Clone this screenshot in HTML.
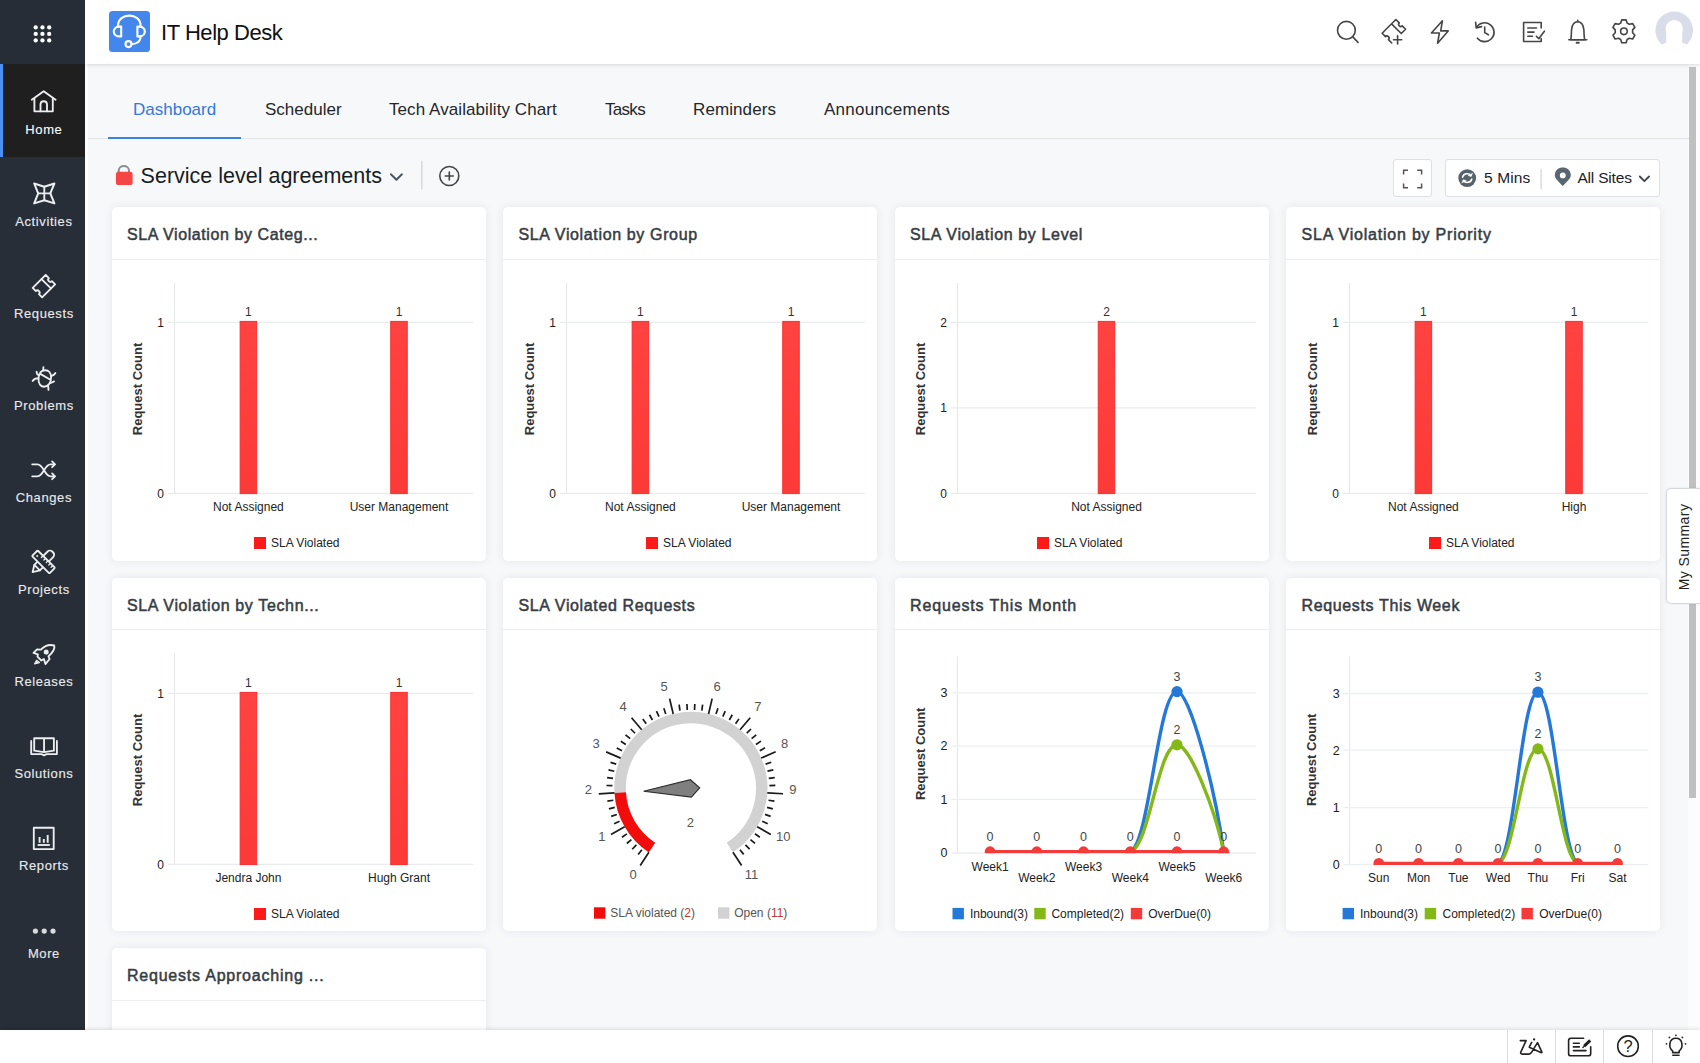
<!DOCTYPE html>
<html lang="en">
<head>
<meta charset="utf-8">
<title>IT Help Desk</title>
<style>
*{box-sizing:border-box;margin:0;padding:0}
html,body{width:1700px;height:1063px;overflow:hidden}
body{font-family:"Liberation Sans",sans-serif;background:#f7f8fa;position:relative;color:#222}
.abs{position:absolute}
#side{position:absolute;left:0;top:0;width:85px;height:1029.5px;background:#272e37}
#side .top{position:absolute;left:0;top:0;width:85px;height:64px;background:#262d36}
#side .item{position:absolute;left:0;width:85px;height:92px;text-align:center;color:#e9ebed;font-size:13px}
#side .item.active{background:#1f1f20;border-left:3px solid #4a8ff2;color:#fff;height:93.4px}
#side .item .lbl{position:absolute;left:0;width:85px;text-align:center;top:55px;line-height:18px;letter-spacing:.6px;-webkit-text-stroke:.12px #e9ebed}
#side .item svg{position:absolute;left:29px;top:23px}
#hdr{position:absolute;left:85px;top:0;width:1615px;height:64px;background:#fff;box-shadow:0 1px 4px rgba(0,0,0,.14)}
#gap{position:absolute;left:85px;top:64px;width:3px;height:965px;background:#fff}
#logo{position:absolute;left:109px;top:11px;width:41px;height:41px;border-radius:3.5px;background:#4487ec}
#brand{position:absolute;left:161px;top:19.4px;font-size:22px;letter-spacing:-.45px;line-height:28px;color:#111;white-space:nowrap}
#tabs{position:absolute;left:88px;top:82px;width:1601px;height:57px;border-bottom:1px solid #dfe2e6}
#tabs .tab{position:absolute;top:0;height:57px;line-height:56px;font-size:17px;color:#23272b;white-space:nowrap}
#tabs .tab.on{color:#3377e0}
#tabs .ul{position:absolute;left:20px;top:54.5px;width:133px;height:2.5px;background:#3b82e8}
#ttl{position:absolute;left:140.6px;top:161.4px;font-size:21.5px;line-height:30px;color:#171d24;white-space:nowrap}
.card{position:absolute;width:374.2px;height:353.4px;background:#fff;border-radius:5px;box-shadow:0 0 9px rgba(40,50,70,.085)}
.card .hd{position:absolute;left:0;top:0;width:100%;height:52.8px;border-bottom:1.5px solid #eceef0;padding-left:15.5px;line-height:56px;font-size:16px;font-weight:400;-webkit-text-stroke:.5px #363c43;letter-spacing:.64px;color:#363c43;white-space:nowrap}
.card svg.ch{position:absolute;left:0;top:53px}
.ch{fill:#222}
.ch text{font-family:"Liberation Sans",sans-serif;font-size:12px}
#foot{position:absolute;left:0;top:1029.5px;width:1700px;height:34px;background:#fff;box-shadow:0 -1px 4px rgba(0,0,0,.12)}
#foot .cell{position:absolute;top:0;width:1px;height:34px;background:#d9dce0}
#sb{position:absolute;left:1689.3px;top:67px;width:6.9px;height:731.4px;background:#c1c0c1}
#sbtrack{position:absolute;left:1688px;top:64px;width:12px;height:966px;background:#fcfcfc}
#mysum{position:absolute;left:1666px;top:488px;width:40px;height:116px;background:#fff;border:1px solid #d5d8dc;border-radius:5px 0 0 5px;box-shadow:0 0 3px rgba(0,0,0,.08)}
</style>
</head>
<body>

<div id="sbtrack"></div>
<div id="sb"></div>
<div id="tabs">
 <div class="tab on" style="left:45px">Dashboard</div>
 <div class="tab" style="left:177px">Scheduler</div>
 <div class="tab" style="left:301px;letter-spacing:.08px">Tech Availability Chart</div>
 <div class="tab" style="left:517px;letter-spacing:-.7px">Tasks</div>
 <div class="tab" style="left:605px;letter-spacing:.1px">Reminders</div>
 <div class="tab" style="left:736px;letter-spacing:.25px">Announcements</div>
 <div class="ul"></div>
</div>
<div id="ttl">Service level agreements</div>
<svg width="360" height="50" viewBox="105 150 360 50" style="position:absolute;left:105px;top:150px" fill="none" stroke-linecap="round" stroke-linejoin="round">
<path d="M118.7,173 V170.8 C118.7,164.4 129,164.4 129,170.8 V173" stroke="#8b9097" stroke-width="2.1"/>
<rect x="115.9" y="171.8" width="16.7" height="13.3" rx="2.6" fill="#f54545"/>
<path d="M390.9,174.3 L396.4,179.7 L401.9,174.3" stroke="#48535e" stroke-width="1.9"/>
<path d="M421.8,161.5 V188.8" stroke="#d3d6da" stroke-width="1.4"/>
<circle cx="449.3" cy="176" r="9.5" stroke="#454545" stroke-width="1.6"/><path d="M445.3,176 H453.3 M449.3,172 V180" stroke="#454545" stroke-width="1.6"/>
</svg>
<div class="abs" style="left:1392.5px;top:159px;width:39px;height:37.5px;background:#fff;border:1px solid #dcdfe3;border-radius:3px"></div>
<div class="abs" style="left:1444.5px;top:159px;width:215px;height:37.5px;background:#fff;border:1px solid #dcdfe3;border-radius:3px"></div>
<svg width="290" height="55" viewBox="1385 150 290 55" style="position:absolute;left:1385px;top:150px" fill="none" stroke-linecap="round" stroke-linejoin="round">
<path d="M1403.6,174.6 V170.3 H1408 M1417.2,170.3 H1421.6 V174.6 M1421.6,183.4 V187.7 H1417.2 M1408,187.7 H1403.6 V183.4" stroke="#555" stroke-width="1.5" stroke-linecap="butt" stroke-linejoin="miter"/>
<circle cx="1467.2" cy="178.1" r="8.9" fill="#56636d"/>
<path d="M1462.6,177.2 C1463.4,173.4 1469,172.6 1470.8,175.6 M1471.8,179 C1471,182.8 1465.4,183.6 1463.6,180.6" stroke="#fff" stroke-width="1.5"/><path d="M1472.4,173.6 L1471.2,176.4 L1468.4,175.6 Z M1462,182.6 L1463.2,179.8 L1466,180.6 Z" fill="#fff" stroke="#fff" stroke-width=".6"/>
<path d="M1541.1,169.6 V188.9" stroke="#d6d9dd" stroke-width="1.4"/>
<path d="M1562.8,185.9 C1558.8,181.6 1554.8,178.6 1554.8,175.2 C1554.8,164.8 1570.8,164.8 1570.8,175.2 C1570.8,178.6 1566.8,181.6 1562.8,185.9 Z" fill="#5a666f"/><circle cx="1562.8" cy="175.4" r="2.9" fill="#fff"/>
<path d="M1639.8,176.5 L1644.4,181.2 L1649,176.5" stroke="#3d4650" stroke-width="1.8"/>
</svg>
<div class="abs" style="left:1484px;top:168px;font-size:15.5px;line-height:20px;letter-spacing:.12px;color:#1d2126;white-space:nowrap">5 Mins</div>
<div class="abs" style="left:1577.4px;top:168px;font-size:15.5px;line-height:20px;letter-spacing:-.18px;color:#1d2126;white-space:nowrap">All Sites</div>

<svg width="0" height="0" style="position:absolute"><defs><linearGradient id="rg" x1="0" x2="0" y1="0" y2="1"><stop offset="0" stop-color="#ff4341"/><stop offset="1" stop-color="#fc3a37"/></linearGradient></defs></svg>
<div class="card" style="left:111.5px;top:207.4px"><div class="hd" style="letter-spacing:.58px">SLA Violation by Categ...</div><svg class="ch" style="left:-0.5px;top:52.6px" width="375" height="300" viewBox="0 0 375 300"><line x1="63.5" x2="63.5" y1="23" y2="233.5" stroke="#e4e6e8" stroke-width="1"/><line x1="57" x2="362" y1="62.3" y2="62.3" stroke="#e9ebed" stroke-width="1.3"/><text x="53" y="66.5" text-anchor="end">1</text><line x1="57" x2="362" y1="233.3" y2="233.3" stroke="#e9ebed" stroke-width="1.3"/><text x="53" y="237.5" text-anchor="end">0</text><rect x="129.15" y="61.4" width="16.5" height="172.2" fill="url(#rg)" stroke="#fb2d2d" stroke-width="1"/><text x="137.4" y="55.699999999999996" text-anchor="middle" style="font-size:12px" fill="#333">1</text><text x="137.4" y="251.2" text-anchor="middle">Not Assigned</text><rect x="279.75" y="61.4" width="16.5" height="172.2" fill="url(#rg)" stroke="#fb2d2d" stroke-width="1"/><text x="288" y="55.699999999999996" text-anchor="middle" style="font-size:12px" fill="#333">1</text><text x="288" y="251.2" text-anchor="middle">User Management</text><text transform="translate(26.2,129) rotate(-90)" text-anchor="middle" style="font-size:13px;font-weight:700" fill="#333" y="4.5">Request Count</text><rect x="143" y="277" width="12" height="12" fill="#ff1a1a"/><text x="160" y="287.3">SLA Violated</text></svg></div>
<div class="card" style="left:503px;top:207.4px"><div class="hd">SLA Violation by Group</div><svg class="ch" style="left:-0.3px;top:52.6px" width="375" height="300" viewBox="0 0 375 300"><line x1="63.5" x2="63.5" y1="23" y2="233.5" stroke="#e4e6e8" stroke-width="1"/><line x1="57" x2="362" y1="62.3" y2="62.3" stroke="#e9ebed" stroke-width="1.3"/><text x="53" y="66.5" text-anchor="end">1</text><line x1="57" x2="362" y1="233.3" y2="233.3" stroke="#e9ebed" stroke-width="1.3"/><text x="53" y="237.5" text-anchor="end">0</text><rect x="129.15" y="61.4" width="16.5" height="172.2" fill="url(#rg)" stroke="#fb2d2d" stroke-width="1"/><text x="137.4" y="55.699999999999996" text-anchor="middle" style="font-size:12px" fill="#333">1</text><text x="137.4" y="251.2" text-anchor="middle">Not Assigned</text><rect x="279.75" y="61.4" width="16.5" height="172.2" fill="url(#rg)" stroke="#fb2d2d" stroke-width="1"/><text x="288" y="55.699999999999996" text-anchor="middle" style="font-size:12px" fill="#333">1</text><text x="288" y="251.2" text-anchor="middle">User Management</text><text transform="translate(26.2,129) rotate(-90)" text-anchor="middle" style="font-size:13px;font-weight:700" fill="#333" y="4.5">Request Count</text><rect x="143" y="277" width="12" height="12" fill="#ff1a1a"/><text x="160" y="287.3">SLA Violated</text></svg></div>
<div class="card" style="left:894.5px;top:207.4px"><div class="hd">SLA Violation by Level</div><svg class="ch" style="left:-0.2px;top:52.6px" width="375" height="300" viewBox="0 0 375 300"><line x1="63.5" x2="63.5" y1="23" y2="233.5" stroke="#e4e6e8" stroke-width="1"/><line x1="57" x2="362" y1="62.3" y2="62.3" stroke="#e9ebed" stroke-width="1.3"/><text x="53" y="66.5" text-anchor="end">2</text><line x1="57" x2="362" y1="147.8" y2="147.8" stroke="#e9ebed" stroke-width="1.3"/><text x="53" y="152.0" text-anchor="end">1</text><line x1="57" x2="362" y1="233.3" y2="233.3" stroke="#e9ebed" stroke-width="1.3"/><text x="53" y="237.5" text-anchor="end">0</text><rect x="204.25" y="61.4" width="16.5" height="172.2" fill="url(#rg)" stroke="#fb2d2d" stroke-width="1"/><text x="212.5" y="55.699999999999996" text-anchor="middle" style="font-size:12px" fill="#333">2</text><text x="212.5" y="251.2" text-anchor="middle">Not Assigned</text><text transform="translate(26.2,129) rotate(-90)" text-anchor="middle" style="font-size:13px;font-weight:700" fill="#333" y="4.5">Request Count</text><rect x="143" y="277" width="12" height="12" fill="#ff1a1a"/><text x="160" y="287.3">SLA Violated</text></svg></div>
<div class="card" style="left:1286px;top:207.4px"><div class="hd" style="letter-spacing:.79px">SLA Violation by Priority</div><svg class="ch" style="left:0.0px;top:52.6px" width="375" height="300" viewBox="0 0 375 300"><line x1="63.5" x2="63.5" y1="23" y2="233.5" stroke="#e4e6e8" stroke-width="1"/><line x1="57" x2="362" y1="62.3" y2="62.3" stroke="#e9ebed" stroke-width="1.3"/><text x="53" y="66.5" text-anchor="end">1</text><line x1="57" x2="362" y1="233.3" y2="233.3" stroke="#e9ebed" stroke-width="1.3"/><text x="53" y="237.5" text-anchor="end">0</text><rect x="129.15" y="61.4" width="16.5" height="172.2" fill="url(#rg)" stroke="#fb2d2d" stroke-width="1"/><text x="137.4" y="55.699999999999996" text-anchor="middle" style="font-size:12px" fill="#333">1</text><text x="137.4" y="251.2" text-anchor="middle">Not Assigned</text><rect x="279.75" y="61.4" width="16.5" height="172.2" fill="url(#rg)" stroke="#fb2d2d" stroke-width="1"/><text x="288" y="55.699999999999996" text-anchor="middle" style="font-size:12px" fill="#333">1</text><text x="288" y="251.2" text-anchor="middle">High</text><text transform="translate(26.2,129) rotate(-90)" text-anchor="middle" style="font-size:13px;font-weight:700" fill="#333" y="4.5">Request Count</text><rect x="143" y="277" width="12" height="12" fill="#ff1a1a"/><text x="160" y="287.3">SLA Violated</text></svg></div>
<div class="card" style="left:111.5px;top:577.7px"><div class="hd">SLA Violation by Techn...</div><svg class="ch" style="left:-0.5px;top:53.3px" width="375" height="300" viewBox="0 0 375 300"><line x1="63.5" x2="63.5" y1="23" y2="233.5" stroke="#e4e6e8" stroke-width="1"/><line x1="57" x2="362" y1="62.3" y2="62.3" stroke="#e9ebed" stroke-width="1.3"/><text x="53" y="66.5" text-anchor="end">1</text><line x1="57" x2="362" y1="233.3" y2="233.3" stroke="#e9ebed" stroke-width="1.3"/><text x="53" y="237.5" text-anchor="end">0</text><rect x="129.15" y="61.4" width="16.5" height="172.2" fill="url(#rg)" stroke="#fb2d2d" stroke-width="1"/><text x="137.4" y="55.699999999999996" text-anchor="middle" style="font-size:12px" fill="#333">1</text><text x="137.4" y="251.2" text-anchor="middle">Jendra John</text><rect x="279.75" y="61.4" width="16.5" height="172.2" fill="url(#rg)" stroke="#fb2d2d" stroke-width="1"/><text x="288" y="55.699999999999996" text-anchor="middle" style="font-size:12px" fill="#333">1</text><text x="288" y="251.2" text-anchor="middle">Hugh Grant</text><text transform="translate(26.2,129) rotate(-90)" text-anchor="middle" style="font-size:13px;font-weight:700" fill="#333" y="4.5">Request Count</text><rect x="143" y="277" width="12" height="12" fill="#ff1a1a"/><text x="160" y="287.3">SLA Violated</text></svg></div>
<div class="card" style="left:503px;top:577.7px"><div class="hd">SLA Violated Requests</div><svg class="ch" width="375" height="300" viewBox="0 0 375 300"><path d="M117.22,161.55 A70.8,70.8 0 1 1 226.80,216.55" fill="none" stroke="#d2d2d2" stroke-width="11.5"/><path d="M149.03,216.58 A70.8,70.8 0 0 1 117.22,161.55" fill="none" stroke="#f20d0d" stroke-width="11.5"/><path d="M145.90,221.34L137.23,234.55M138.89,218.72L135.14,223.41M133.40,213.90L129.24,218.22M128.38,208.59L123.84,212.50M123.88,202.83L118.99,206.31M121.67,195.68L107.99,203.59M116.58,190.20L111.13,192.70M113.84,183.43L108.18,185.41M111.74,176.43L105.92,177.88M110.30,169.27L104.37,170.17M111.53,161.88L95.76,162.81M109.45,154.70L103.45,154.49M110.04,147.41L104.09,146.65M111.30,140.22L105.45,138.91M113.23,133.17L107.52,131.32M117.64,127.13L103.13,120.88M119.01,119.77L113.74,116.89M122.80,113.53L117.83,110.18M127.16,107.67L122.52,103.87M132.05,102.24L127.78,98.02M138.71,98.81L128.55,86.71M143.23,92.85L139.81,87.92M149.42,88.98L146.48,83.75M155.95,85.70L153.51,80.22M162.75,83.04L160.83,77.35M170.24,82.97L166.59,67.59M176.95,79.67L176.12,73.73M184.23,78.99L183.95,72.99M191.53,78.98L191.81,72.99M198.81,79.66L199.64,73.72M205.52,82.96L209.16,67.58M213.01,83.02L214.93,77.34M219.81,85.68L222.25,80.20M226.34,88.96L229.28,83.73M232.54,92.83L235.95,87.89M237.06,98.79L247.22,86.68M243.72,102.21L247.99,97.99M248.61,107.64L253.25,103.83M252.97,113.49L257.95,110.14M256.77,119.73L262.04,116.85M258.14,127.09L272.65,120.83M262.56,133.13L268.26,131.28M264.49,140.18L270.34,138.86M265.76,147.37L271.71,146.61M266.35,154.65L272.35,154.45M264.27,161.84L280.04,162.76M265.50,169.23L271.44,170.13M264.07,176.39L269.89,177.84M261.97,183.39L267.64,185.37M259.24,190.16L264.69,192.66M254.15,195.65L267.83,203.55M251.94,202.80L256.83,206.27M247.44,208.56L251.99,212.47M242.43,213.87L246.60,218.19M236.94,218.69L240.69,223.38M229.93,221.32L238.62,234.52" stroke="#1a1a1a" stroke-width="1.7" fill="none"/><text x="130.2" y="247.6" text-anchor="middle" style="font-size:13px" fill="#555">0</text><text x="98.8" y="210.2" text-anchor="middle" style="font-size:13px" fill="#555">1</text><text x="85.4" y="162.6" text-anchor="middle" style="font-size:13px" fill="#555">2</text><text x="93.0" y="117.3" text-anchor="middle" style="font-size:13px" fill="#555">3</text><text x="120.0" y="80.3" text-anchor="middle" style="font-size:13px" fill="#555">4</text><text x="161.2" y="59.8" text-anchor="middle" style="font-size:13px" fill="#555">5</text><text x="214.2" y="59.8" text-anchor="middle" style="font-size:13px" fill="#555">6</text><text x="254.9" y="80.3" text-anchor="middle" style="font-size:13px" fill="#555">7</text><text x="281.7" y="117.3" text-anchor="middle" style="font-size:13px" fill="#555">8</text><text x="289.9" y="162.6" text-anchor="middle" style="font-size:13px" fill="#555">9</text><text x="280.2" y="210.2" text-anchor="middle" style="font-size:13px" fill="#555">10</text><text x="248.4" y="247.6" text-anchor="middle" style="font-size:13px" fill="#555">11</text><g transform="translate(187.90,157.40) rotate(-3.36)"><path d="M-47.3,0 L0,-8.7 L8.8,0 L0,8.7 Z" fill="#7f7f7f" stroke="#2b2b2b" stroke-width="1.1" stroke-linejoin="miter"/></g><text x="187.3" y="195.5" text-anchor="middle" style="font-size:13px" fill="#555">2</text><rect x="91.0" y="276.3" width="11.4" height="11.4" fill="#f20d0d"/><text x="107.3" y="286.3" fill="#555">SLA violated (<tspan fill="#c0392b">2</tspan>)</text><rect x="215.0" y="276.3" width="11.4" height="11.4" fill="#d2d2d2"/><text x="231.2" y="286.3" fill="#555">Open (<tspan fill="#c0392b">11</tspan>)</text></svg></div>

<div class="card" style="left:894.5px;top:577.7px"><div class="hd" style="letter-spacing:.85px">Requests This Month</div><svg class="ch" width="375" height="300" viewBox="0 0 375 300"><line x1="62.4" x2="62.4" y1="25.299999999999955" y2="222.5" stroke="#e4e6e8" stroke-width="1"/><line x1="56.4" x2="361.1" y1="222.0" y2="222.0" stroke="#eceef0" stroke-width="1.3"/><text x="52.4" y="226.3" text-anchor="end" style="font-size:12.5px">0</text><line x1="56.4" x2="361.1" y1="168.4" y2="168.4" stroke="#eceef0" stroke-width="1.3"/><text x="52.4" y="172.7" text-anchor="end" style="font-size:12.5px">1</text><line x1="56.4" x2="361.1" y1="115.1" y2="115.1" stroke="#eceef0" stroke-width="1.3"/><text x="52.4" y="119.4" text-anchor="end" style="font-size:12.5px">2</text><line x1="56.4" x2="361.1" y1="61.9" y2="61.9" stroke="#eceef0" stroke-width="1.3"/><text x="52.4" y="66.2" text-anchor="end" style="font-size:12.5px">3</text><text transform="translate(25.0,122.8) rotate(-90)" text-anchor="middle" style="font-size:13px;font-weight:700" fill="#333" y="4.5">Request Count</text><g clip-path="url(#cp2)"><g transform="translate(0,-1.3)"><clipPath id="cp2"><rect x="0" y="0" width="375" height="222.2"/></clipPath><path d="M235.3,222.0 C254.6,214.2 262.9,61.9 282.0,61.9 C295.0,61.9 320.2,159.9 328.7,222.0" fill="none" stroke="#2478d8" stroke-width="3.4" stroke-linejoin="round"/><circle cx="282.0" cy="61.9" r="5.6" fill="#2478d8"/><path d="M235.3,222.0 C254.6,216.8 262.9,115.1 282.0,115.1 C295.0,115.1 320.2,180.5 328.7,222.0" fill="none" stroke="#83b817" stroke-width="3.4" stroke-linejoin="round"/><circle cx="282.0" cy="115.1" r="5.6" fill="#83b817"/><path d="M95.1,222.0 L328.7,222.0" stroke="#f53a3a" stroke-width="3.2"/><circle cx="95.1" cy="222.0" r="5.4" fill="#f53a3a"/><circle cx="141.8" cy="222.0" r="5.4" fill="#f53a3a"/><circle cx="188.5" cy="222.0" r="5.4" fill="#f53a3a"/><circle cx="235.3" cy="222.0" r="5.4" fill="#f53a3a"/><circle cx="282.0" cy="222.0" r="5.4" fill="#f53a3a"/><circle cx="328.7" cy="222.0" r="5.4" fill="#f53a3a"/></g></g><text x="95.1" y="209.9" text-anchor="middle" style="font-size:12.5px" fill="#444">0</text><text x="95.1" y="239.6" text-anchor="middle">Week1</text><text x="141.8" y="209.9" text-anchor="middle" style="font-size:12.5px" fill="#444">0</text><text x="141.8" y="251.4" text-anchor="middle">Week2</text><text x="188.5" y="209.9" text-anchor="middle" style="font-size:12.5px" fill="#444">0</text><text x="188.5" y="239.6" text-anchor="middle">Week3</text><text x="235.3" y="209.9" text-anchor="middle" style="font-size:12.5px" fill="#444">0</text><text x="235.3" y="251.4" text-anchor="middle">Week4</text><text x="282.0" y="209.9" text-anchor="middle" style="font-size:12.5px" fill="#444">0</text><text x="282.0" y="239.6" text-anchor="middle">Week5</text><text x="328.7" y="209.9" text-anchor="middle" style="font-size:12.5px" fill="#444">0</text><text x="328.7" y="251.4" text-anchor="middle">Week6</text><text x="282.0" y="49.7" text-anchor="middle" style="font-size:12.5px" fill="#444">3</text><text x="282.0" y="102.9" text-anchor="middle" style="font-size:12.5px" fill="#444">2</text><rect x="57.5" y="276.9" width="11.4" height="11.4" fill="#2478d8"/><text x="74.9" y="286.9">Inbound(3)</text><rect x="139.3" y="276.9" width="11.4" height="11.4" fill="#83b817"/><text x="156.4" y="286.9">Completed(2)</text><rect x="235.8" y="276.9" width="11.4" height="11.4" fill="#f53a3a"/><text x="253.2" y="286.9">OverDue(0)</text></svg></div>

<div class="card" style="left:1286px;top:577.7px"><div class="hd">Requests This Week</div><svg class="ch" width="375" height="300" viewBox="0 0 375 300"><line x1="63.6" x2="63.6" y1="25.299999999999955" y2="234.2" stroke="#e4e6e8" stroke-width="1"/><line x1="57.6" x2="361.8" y1="233.7" y2="233.7" stroke="#eceef0" stroke-width="1.3"/><text x="53.6" y="238.0" text-anchor="end" style="font-size:12.5px">0</text><line x1="57.6" x2="361.8" y1="176.6" y2="176.6" stroke="#eceef0" stroke-width="1.3"/><text x="53.6" y="180.9" text-anchor="end" style="font-size:12.5px">1</text><line x1="57.6" x2="361.8" y1="119.2" y2="119.2" stroke="#eceef0" stroke-width="1.3"/><text x="53.6" y="123.5" text-anchor="end" style="font-size:12.5px">2</text><line x1="57.6" x2="361.8" y1="62.5" y2="62.5" stroke="#eceef0" stroke-width="1.3"/><text x="53.6" y="66.8" text-anchor="end" style="font-size:12.5px">3</text><text transform="translate(25.4,128.8) rotate(-90)" text-anchor="middle" style="font-size:13px;font-weight:700" fill="#333" y="4.5">Request Count</text><g clip-path="url(#cp3)"><g transform="translate(0,-1.3)"><clipPath id="cp3"><rect x="0" y="0" width="375" height="233.9"/></clipPath><path d="M212.1,233.7 C228.6,225.3 235.7,62.5 251.9,62.5 C268.2,62.5 275.3,225.3 291.7,233.7" fill="none" stroke="#2478d8" stroke-width="3.4" stroke-linejoin="round"/><circle cx="251.9" cy="62.5" r="5.6" fill="#2478d8"/><path d="M212.1,233.7 C228.6,228.1 235.7,119.2 251.9,119.2 C268.2,119.2 275.3,228.1 291.7,233.7" fill="none" stroke="#83b817" stroke-width="3.4" stroke-linejoin="round"/><circle cx="251.9" cy="119.2" r="5.6" fill="#83b817"/><path d="M92.8,233.7 L331.5,233.7" stroke="#f53a3a" stroke-width="3.2"/><circle cx="92.8" cy="233.7" r="5.4" fill="#f53a3a"/><circle cx="132.6" cy="233.7" r="5.4" fill="#f53a3a"/><circle cx="172.4" cy="233.7" r="5.4" fill="#f53a3a"/><circle cx="212.1" cy="233.7" r="5.4" fill="#f53a3a"/><circle cx="251.9" cy="233.7" r="5.4" fill="#f53a3a"/><circle cx="291.7" cy="233.7" r="5.4" fill="#f53a3a"/><circle cx="331.5" cy="233.7" r="5.4" fill="#f53a3a"/></g></g><text x="92.8" y="221.9" text-anchor="middle" style="font-size:12.5px" fill="#444">0</text><text x="92.8" y="251.2" text-anchor="middle">Sun</text><text x="132.6" y="221.9" text-anchor="middle" style="font-size:12.5px" fill="#444">0</text><text x="132.6" y="251.2" text-anchor="middle">Mon</text><text x="172.4" y="221.9" text-anchor="middle" style="font-size:12.5px" fill="#444">0</text><text x="172.4" y="251.2" text-anchor="middle">Tue</text><text x="212.1" y="221.9" text-anchor="middle" style="font-size:12.5px" fill="#444">0</text><text x="212.1" y="251.2" text-anchor="middle">Wed</text><text x="251.9" y="221.9" text-anchor="middle" style="font-size:12.5px" fill="#444">0</text><text x="251.9" y="251.2" text-anchor="middle">Thu</text><text x="291.7" y="221.9" text-anchor="middle" style="font-size:12.5px" fill="#444">0</text><text x="291.7" y="251.2" text-anchor="middle">Fri</text><text x="331.5" y="221.9" text-anchor="middle" style="font-size:12.5px" fill="#444">0</text><text x="331.5" y="251.2" text-anchor="middle">Sat</text><text x="251.9" y="50.3" text-anchor="middle" style="font-size:12.5px" fill="#444">3</text><text x="251.9" y="107.0" text-anchor="middle" style="font-size:12.5px" fill="#444">2</text><rect x="56.6" y="276.9" width="11.4" height="11.4" fill="#2478d8"/><text x="74.0" y="286.9">Inbound(3)</text><rect x="138.7" y="276.9" width="11.4" height="11.4" fill="#83b817"/><text x="156.5" y="286.9">Completed(2)</text><rect x="235.5" y="276.9" width="11.4" height="11.4" fill="#f53a3a"/><text x="253.2" y="286.9">OverDue(0)</text></svg></div>

<div class="card" style="left:111.5px;top:948px;height:120px"><div class="hd" style="letter-spacing:.78px">Requests Approaching ...</div></div>

<div id="mysum"><div style="position:absolute;left:-40.6px;top:48.6px;width:116px;height:18px;line-height:18px;text-align:center;transform:rotate(-90deg);font-size:14px;letter-spacing:.42px;color:#222;white-space:nowrap">My Summary</div></div>
<div id="gap"></div>
<div id="hdr"></div>
<div id="logo"><svg width="41" height="41" viewBox="0 0 41 41" style="position:absolute;left:0;top:0" fill="none" stroke="#fff" stroke-width="2.1" stroke-linecap="round" stroke-linejoin="round"><path d="M9,14.8 C9,1.2 31.6,1.2 31.6,14.8"/><path d="M12.2,15.6 V25.4 H10.2 C3,25.4 3,15.6 10.2,15.6 Z"/><path d="M28.4,15.6 V25.4 H30.4 C37.6,25.4 37.6,15.6 30.4,15.6 Z"/><path d="M31.6,25.4 C31.6,30.5 27.5,33 22.6,33"/><circle cx="19.5" cy="33.1" r="3"/></svg>
</div>
<div id="brand">IT Help Desk</div>
<svg width="400" height="64" viewBox="1300 0 400 64" style="position:absolute;left:1300px;top:0" fill="none" stroke="#454545" stroke-width="1.6" stroke-linecap="round" stroke-linejoin="round">
<circle cx="1346.4" cy="30.3" r="8.9"/><path d="M1352.8,36.9 L1358,42.4"/>
<g transform="translate(1393.85,31.25) rotate(-45)"><path d="M-9.75,6.85 V2.1 A2.1,2.1 0 0 0 -9.75,-2.1 V-6.85 H9.75 V-2.1 A2.1,2.1 0 0 0 9.75,2.1 V6.85 H3.6 V-6.85"/></g>
<path d="M1393.5,39.8 H1401.7 M1397.6,35.7 V43.9"/>
<path d="M1442.4,20.8 L1431.4,33 H1439.4 L1437.6,43.2 L1448.2,30.9 H1440.7 Z"/>
<path d="M1476.6,27.4 A9.4,9.4 0 1 1 1477.4,38.2"/><path d="M1475.6,22.2 L1476.2,27.9 L1481.6,26.6"/><path d="M1484.7,27 V32.6 L1488.4,34.8"/>
<path d="M1541.2,28 V22.5 H1523.6 V41.5 H1541.2 V38.6"/><path d="M1527.8,28 H1536.5 M1527.8,32.1 H1534 M1527.8,36.2 H1532.4"/><path d="M1536.4,36.4 L1538.9,38.6 L1544.4,31.2"/>
<path d="M1570.7,39.8 C1571.6,36 1571.2,32.6 1571.6,29.4 C1572.2,24.6 1574.6,21.8 1577.7,21.8 C1580.8,21.8 1583.2,24.6 1583.8,29.4 C1584.2,32.6 1583.8,36 1584.7,39.8 Z"/><path d="M1568.8,39.8 H1586.8 M1577.7,21.6 V20.2"/><path d="M1576.6,42.8 H1578.8" stroke-width="2"/>
<g transform="translate(1623.9,31.3)"><circle r="3.3"/><path d="M-2.2,-11.4 H2.2 L3.2,-8.2 L5.4,-7 L8.8,-7.7 L11,-3.9 L8.7,-1.4 V1.4 L11,3.9 L8.8,7.7 L5.4,7 L3.2,8.2 L2.2,11.4 H-2.2 L-3.2,8.2 L-5.4,7 L-8.8,7.7 L-11,3.9 L-8.7,1.4 V-1.4 L-11,-3.9 L-8.8,-7.7 L-5.4,-7 L-3.2,-8.2 Z" stroke-linejoin="round"/></g>
<g stroke="none"><clipPath id="av"><circle cx="1674.2" cy="30.4" r="18.8"/></clipPath><circle cx="1674.2" cy="30.4" r="18.8" fill="#d9dde9"/><g clip-path="url(#av)" fill="#fff"><circle cx="1674.2" cy="28.6" r="8.7"/><rect x="1666.2" y="28" width="16" height="24"/><ellipse cx="1674.2" cy="56.5" rx="22" ry="15"/></g></g>
</svg>

<div id="side">
 <div class="top"><svg width="85" height="64" viewBox="0 0 85 64" style="position:absolute;left:0;top:0" fill="#fff"><circle cx="35.7" cy="27.4" r="2.15"/><circle cx="42.45" cy="27.4" r="2.15"/><circle cx="49.2" cy="27.4" r="2.15"/><circle cx="35.7" cy="33.9" r="2.15"/><circle cx="42.45" cy="33.9" r="2.15"/><circle cx="49.2" cy="33.9" r="2.15"/><circle cx="35.7" cy="40.4" r="2.15"/><circle cx="42.45" cy="40.4" r="2.15"/><circle cx="49.2" cy="40.4" r="2.15"/></svg>
</div>
<div class="item active" style="top:64px"><svg width="85" height="92" viewBox="0 64 85 92" style="left:-3px;top:0" fill="none" stroke="#eceef0" stroke-width="1.85" stroke-linecap="round" stroke-linejoin="round"><path d="M31.8,99.8 L43.7,91.2 L55.6,99.8"/><path d="M34.4,98.6 V111.3 H52.8 V98.6"/><path d="M40.5,111.3 V104.6 C40.5,100.2 47,100.2 47,104.6 V111.3"/></svg><div class="lbl" style="top:57px;left:-1.6px">Home</div></div>
<div class="item" style="top:156.5px"><svg width="85" height="92" viewBox="0 156.5 85 92" style="left:0px;top:0" fill="none" stroke="#eceef0" stroke-width="1.85" stroke-linecap="round" stroke-linejoin="round"><path d="M34.2,183 L44.3,186.2 L54.4,183 L50.3,192.9 L54.4,202.9 L44.3,199.7 L34.2,202.9 L38.2,192.9 Z" stroke-width="2"/><path d="M44.3,186.2 V199.7 M38.2,192.9 H50.3"/></svg><div class="lbl" style="top:56px;left:1.4px">Activities</div></div>
<div class="item" style="top:248.5px"><svg width="85" height="92" viewBox="0 248.5 85 92" style="left:0px;top:0" fill="none" stroke="#eceef0" stroke-width="1.85" stroke-linecap="round" stroke-linejoin="round"><g transform="translate(43.9,285.6) rotate(-45)"><path d="M-9.2,-6.65 H9.2 V-2.2 A2.2,2.2 0 0 0 9.2,2.2 V6.65 H-9.2 V2.2 A2.2,2.2 0 0 0 -9.2,-2.2 Z"/><path d="M3.3,-6.65 V6.65"/></g></svg><div class="lbl" style="top:56px;left:1.4px">Requests</div></div>
<div class="item" style="top:340.5px"><svg width="85" height="92" viewBox="0 340.5 85 92" style="left:0px;top:0" fill="none" stroke="#eceef0" stroke-width="1.85" stroke-linecap="round" stroke-linejoin="round"><path d="M39.6,373.6 C40.5,370.8 43,369.7 45.4,369.7 C48.6,369.7 51.1,372.4 51.1,376.9 C51.1,381.6 48.6,386.2 44.3,386.2 C40.6,386.2 38.5,383 38.5,378.8 C38.5,376.8 38.9,375 39.6,373.6 Z"/><path d="M40.3,373.4 L49.6,378.8"/><path d="M43.2,369.8 L43.4,366.7 M39,374.7 C37.2,374 36.6,373 36.6,371.2 M38.6,377.8 C35.6,377.6 33.8,378.8 32.6,380.5 M50.9,375.7 C53,375.2 54.4,374 55.4,372.6 M50.8,382.5 L54.1,380.9 M48.1,385.2 L48.5,389.3"/></svg><div class="lbl" style="top:56px;left:1.4px">Problems</div></div>
<div class="item" style="top:432.5px"><svg width="85" height="92" viewBox="0 432.5 85 92" style="left:0px;top:0" fill="none" stroke="#eceef0" stroke-width="1.85" stroke-linecap="round" stroke-linejoin="round"><path d="M32.2,463.8 H37.5 C43.5,463.8 44.5,475.8 50.5,475.8 H54.6"/><path d="M32.2,475.8 H37.5 C43.5,475.8 44.5,463.8 50.5,463.8 H54.6"/><path d="M52.1,460.9 L55,463.8 L52.1,466.7 M52.1,472.9 L55,475.8 L52.1,478.7"/></svg><div class="lbl" style="top:56px;left:1.4px">Changes</div></div>
<div class="item" style="top:524.5px"><svg width="85" height="92" viewBox="0 524.5 85 92" style="left:0px;top:0" fill="none" stroke="#eceef0" stroke-width="1.85" stroke-linecap="round" stroke-linejoin="round"><g transform="translate(32.6,571.6) rotate(-45)"><path d="M0,0 L6.4,-3.9 H25.2 A3.2,3.2 0 0 1 28.4,-.7 V.7 A3.2,3.2 0 0 1 25.2,3.9 H6.4 Z"/><path d="M6.4,-3.9 V3.9"/></g><g transform="translate(43.5,561.4) rotate(45)"><rect x="-12.3" y="-4" width="24.6" height="8" rx=".9" fill="#272e37"/><path d="M-4.6,-4 V-1.6 M-1.1,-4 V-1.6 M2.4,-4 V-1.6 M5.9,-4 V-1.6 M9.2,-4 V-1.6" stroke-width="1.3"/><circle cx="-8.6" cy=".3" r=".95" fill="#eceef0" stroke="none"/></g></svg><div class="lbl" style="top:56px;left:1.4px">Projects</div></div>
<div class="item" style="top:616.5px"><svg width="85" height="92" viewBox="0 616.5 85 92" style="left:0px;top:0" fill="none" stroke="#eceef0" stroke-width="1.85" stroke-linecap="round" stroke-linejoin="round"><path d="M54.2,645 C49.6,643.6 44.6,645.4 40.9,649.1 L37,648.9 L33.5,652.4 L37.9,653.9 L37.5,656.2 L41.3,660 L43.9,658.5 L45.4,663.6 L49.6,658.5 L48.5,655.8 C52.6,652 55.4,648.6 54.2,645 Z"/><circle cx="46.2" cy="651.6" r="1.6" fill="#eceef0"/><path d="M36.4,659.8 L34.3,663.6 L39.6,662.2 Z" fill="#eceef0" stroke-width="1"/></svg><div class="lbl" style="top:56px;left:1.4px">Releases</div></div>
<div class="item" style="top:708.5px"><svg width="85" height="92" viewBox="0 708.5 85 92" style="left:0px;top:0" fill="none" stroke="#eceef0" stroke-width="1.85" stroke-linecap="round" stroke-linejoin="round"><path d="M34.2,737.7 H53.9 V750.2 L44.05,751.6 L34.2,750.2 Z M44.05,737.7 V751.6"/><path d="M31.2,740.4 V753.6 H41.6 L44.05,754.8 L46.5,753.6 H56.9 V740.4"/></svg><div class="lbl" style="top:56px;left:1.4px">Solutions</div></div>
<div class="item" style="top:800.5px"><svg width="85" height="92" viewBox="0 800.5 85 92" style="left:0px;top:0" fill="none" stroke="#eceef0" stroke-width="1.85" stroke-linecap="round" stroke-linejoin="round"><rect x="33.8" y="827.2" width="19.9" height="21.4"/><path d="M39.6,842.2 V836.4 M43.8,842.2 V838.6 M47.7,842.2 V834.6" stroke-width="1.9" stroke-linecap="butt"/><path d="M37.6,844.5 H49.8" stroke-linecap="butt"/></svg><div class="lbl" style="top:56px;left:1.4px">Reports</div></div>
<div class="item" style="top:892.5px"><svg width="85" height="92" viewBox="0 892.5 85 92" style="left:0px;top:0" fill="none" stroke="#eceef0" stroke-width="1.85" stroke-linecap="round" stroke-linejoin="round"><g fill="#d9dcdf" stroke="none"><circle cx="35.4" cy="930.6" r="2.6"/><circle cx="44.2" cy="930.6" r="2.6"/><circle cx="53" cy="930.6" r="2.6"/></g></svg><div class="lbl" style="top:52px;left:1.4px">More</div></div>

</div>
<div id="foot">
<div class="cell" style="left:1507px"></div><div class="cell" style="left:1555px"></div><div class="cell" style="left:1603px"></div><div class="cell" style="left:1652px"></div>
<svg width="200" height="34" viewBox="1500 1029 200 34" style="position:absolute;left:1500px;top:-.5px" fill="none" stroke="#222" stroke-width="1.6" stroke-linecap="round" stroke-linejoin="round"><title>Zia</title>
<path d="M1520.3,1040.6 H1526.1 L1520.9,1051.8 C1520.3,1053.2 1520.8,1054.1 1522.2,1054.1 H1528.6 C1530,1054.1 1530.6,1053.6 1531.2,1052.8 L1537.5,1042.7 L1541.8,1051.8 C1542.2,1052.7 1541.6,1052.8 1540.8,1052.4 L1529.8,1047.6 C1529.2,1047.3 1529.2,1046.9 1529.5,1046.4 L1531.7,1042.4"/><circle cx="1534.1" cy="1039.4" r="1.15" fill="#222" stroke="none"/>
<path d="M1583.6,1038.3 H1571 Q1568.6,1038.3 1568.6,1040.7 V1053.4 Q1568.6,1055.8 1571,1055.8 H1588.3 Q1590.7,1055.8 1590.7,1053.4 V1046.8"/><path d="M1573.4,1043.2 H1579.3 M1573.4,1046.9 H1579.3 M1573.4,1050.6 H1586"/><path d="M1590.2,1040.4 L1584.2,1046.2" stroke-width="3" stroke-linecap="butt"/><path d="M1584.2,1046.2 L1582.9,1047.5" stroke-width="1.3"/>
<circle cx="1628" cy="1046.2" r="10.3"/>
<text x="1628" y="1052" text-anchor="middle" stroke="none" fill="#222" style="font-family:'Liberation Sans',sans-serif;font-size:16.5px;font-weight:400;-webkit-text-stroke:.4px #222">?</text>
<path d="M1672.6,1050.8 C1668.4,1048 1668.6,1038.2 1675.9,1038.2 C1683.2,1038.2 1683.4,1048 1679.2,1050.8 V1052.6 H1672.6 Z"/><path d="M1672.8,1055.2 H1679"/>
<g fill="#222" stroke="none"><circle cx="1666.5" cy="1043.8" r=".9"/><circle cx="1669.4" cy="1037.4" r=".9"/><circle cx="1675.9" cy="1035.3" r=".9"/><circle cx="1682.4" cy="1037.4" r=".9"/><circle cx="1685.5" cy="1043.8" r=".9"/></g>
</svg>

</div>
</body>
</html>
